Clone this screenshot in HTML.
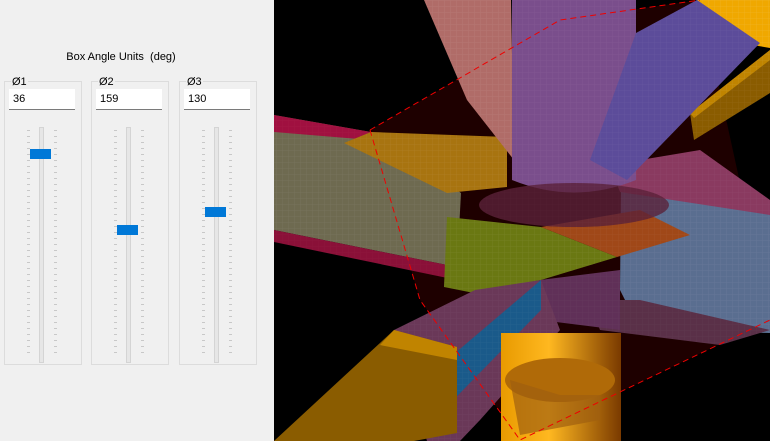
<!DOCTYPE html>
<html><head><meta charset="utf-8"><style>
html,body{margin:0;padding:0;width:770px;height:441px;overflow:hidden;background:#f0f0f0;font-family:"Liberation Sans",sans-serif;}
#left{position:absolute;left:0;top:0;width:274px;height:441px;background:#f0f0f0;}
.title{position:absolute;top:51px;left:0;width:242px;text-align:center;font-size:11px;color:#000;}
.grp{position:absolute;top:81px;width:76px;height:282px;border:1px solid #dcdcdc;}
.lbl{position:absolute;top:-6px;left:6px;background:#f0f0f0;font-size:11px;padding:0 1px;line-height:12px;}
.tb{position:absolute;top:7px;left:4px;width:66px;height:21px;background:#fff;border-bottom:1px solid #7a7a7a;box-sizing:border-box;font-size:11px;padding:4px 0 0 4px;}
.track{position:absolute;top:45px;width:3px;height:234px;background:#e6e6e6;border:1px solid #d4d4d4;left:34px;}
.ticks{position:absolute;top:48px;width:3px;height:228px;background:repeating-linear-gradient(#c8c8c8 0 1px,transparent 1px 6px);}
.thumb{position:absolute;left:25px;width:21px;height:10px;background:#0078d7;}
</style></head><body>
<div id="left">
<div class="title">Box Angle Units&nbsp; (deg)</div>
<div class="grp" style="left:4px"><span class="lbl">Ø1</span><div class="tb">36</div><div class="ticks" style="left:22px"></div><div class="ticks" style="left:49px"></div><div class="track"></div><div class="thumb" style="top:67px"></div></div>
<div class="grp" style="left:91px"><span class="lbl">Ø2</span><div class="tb">159</div><div class="ticks" style="left:22px"></div><div class="ticks" style="left:49px"></div><div class="track"></div><div class="thumb" style="top:143px"></div></div>
<div class="grp" style="left:179px"><span class="lbl">Ø3</span><div class="tb">130</div><div class="ticks" style="left:22px"></div><div class="ticks" style="left:49px"></div><div class="track"></div><div class="thumb" style="top:125px"></div></div>
</div>
<svg style="position:absolute;left:274px;top:0" width="496" height="441" viewBox="274 0 496 441">
<defs>
<pattern id="g" width="6" height="6" patternUnits="userSpaceOnUse"><path d="M0 0H6M0 0V6" stroke="rgba(255,255,255,0.3)" stroke-width="1" fill="none"/></pattern>
<linearGradient id="gold" x1="0" x2="1"><stop offset="0" stop-color="#e89a00"/><stop offset="0.4" stop-color="#ffb820"/><stop offset="1" stop-color="#7a3a00"/></linearGradient>
</defs>
<rect x="274" y="0" width="496" height="441" fill="#000"/>
<polygon points="370,130 560,20 700,0 770,320 520,440 420,300" fill="#1e0000"/>
<g id="shapes">
<polygon points="697,0 770,0 770,48 735,42" fill="#f0a800"/>
<polygon points="690,113 770,50 770,93 694,140" fill="#8a5c00"/>
<polygon points="690,113 770,50 770,60 694,118" fill="#c08400"/>
<polygon points="274,115 371,132 461,193 457,267 274,230" fill="#6e6a50"/>
<polygon points="274,115 371,132 371,140 274,132" fill="#a01040"/>
<polygon points="274,230 457,267 457,280 274,242" fill="#8a1038"/>
<polygon points="344,143 371,132 507,137 507,187 447,193" fill="#a87410"/>
<polygon points="424,0 511,0 514,160 467,100" fill="#b06c68"/>
<polygon points="621,187 770,207 770,333 640,330 620,290" fill="#5a6e90"/>
<polygon points="610,165 700,150 770,200 770,215 620,192" fill="#8a3a60"/>
<polygon points="447,217 541,227 617,257 541,280 474,293 444,287" fill="#6a7812"/>
<polygon points="541,227 640,210 690,235 617,257" fill="#a04818"/>
<path d="M512 0H636V180Q574 205 512 180Z" fill="#7a4e8c"/>
<polygon points="636,33 697,0 760,43 627,180 590,160" fill="#5c4c9a"/>
<ellipse cx="574" cy="205" rx="95" ry="22" fill="#5a2038" opacity="0.8"/>
<polygon points="588,300 640,300 770,330 720,345 600,330" fill="#5a3048"/>
<polygon points="540,280 620,270 620,330 540,320" fill="#603058"/>
<polygon points="394,330 475,290 541,280 560,330 480,420 460,441 427,441" fill="#6a3858"/>
<polygon points="427,377 541,280 541,310 427,427" fill="#1a5a8a"/>
</g>
<rect x="274" y="0" width="496" height="441" fill="url(#g)" opacity="0.5" mask="url(#m)"/>
<mask id="m"><use href="#shapes" fill="#fff"/></mask>
<rect x="501" y="333" width="120" height="108" fill="url(#gold)"/>
<ellipse cx="560" cy="380" rx="55" ry="22" fill="#b06a08"/>
<polygon points="510,380 560,395 600,395 600,420 520,435" fill="#a06010" opacity="0.7"/>
<polygon points="274,441 394,330 457,347 457,433 414,441" fill="#8a5c00"/>
<polygon points="394,330 457,347 457,360 380,345" fill="#c08400"/>
<polyline points="370,130 560,20 700,0" fill="none" stroke="#e00" stroke-dasharray="6,4"/>
<polyline points="370,130 420,300 520,440 770,320" fill="none" stroke="#e00" stroke-dasharray="6,4"/>
</svg>
</body></html>
